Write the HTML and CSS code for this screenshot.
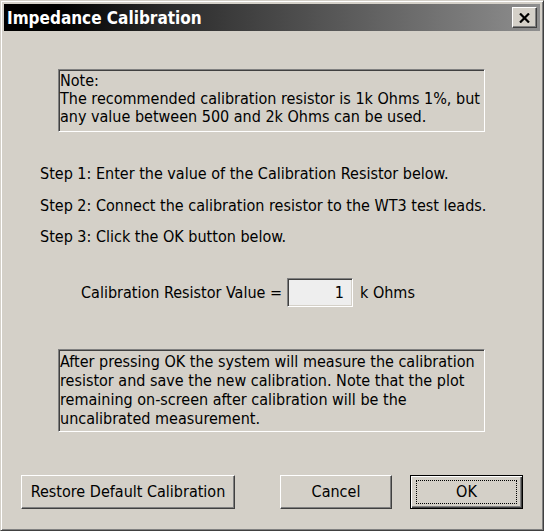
FILE: index.html
```html
<!DOCTYPE html>
<html>
<head>
<meta charset="utf-8">
<link rel="stylesheet" href="styles.css">
</head>
<body>
<div class="window">
  <div class="titlebar">
    <span class="title">Impedance Calibration</span>
    <div class="close">
      <svg width="11" height="10" viewBox="0 0 11 10"><path d="M1 0.5 L10 9.5 M10 0.5 L1 9.5" stroke="#000" stroke-width="2.2" fill="none"/></svg>
    </div>
  </div>
  <div class="content">
    <div class="box note">Note:<br>The recommended calibration resistor is 1k Ohms 1%, but<br>any value between 500 and 2k Ohms can be used.</div>
    <div class="steps">
      <p>Step 1: Enter the value of the Calibration Resistor below.</p>
      <p>Step 2: Connect the calibration resistor to the WT3 test leads.</p>
      <p>Step 3: Click the OK button below.</p>
    </div>
    <div class="value-row">
      <span class="label">Calibration Resistor Value =</span>
      <div class="field">1</div>
      <span class="unit">k Ohms</span>
    </div>
    <div class="box info">After pressing OK the system will measure the calibration<br>resistor and save the new calibration. Note that the plot<br>remaining on-screen after calibration will be the<br>uncalibrated measurement.</div>
    <div class="buttons">
      <div class="btn restore">Restore Default Calibration</div>
      <div class="btn cancel">Cancel</div>
      <div class="btn ok"><span class="focus">OK</span></div>
    </div>
  </div>
</div>
</body>
</html>
```
FILE: styles.css
```css
html, body {
  margin: 0;
  padding: 0;
}
body {
  background: #d4d0c8;
  font-family: "DejaVu Sans Condensed", "DejaVu Sans", sans-serif;
  font-stretch: condensed;
  font-size: 16px;
  color: #000;
}
.window {
  width: 544px;
  height: 531px;
  box-sizing: border-box;
  border: 1px solid;
  border-color: #d4d0c8 #404040 #404040 #d4d0c8;
  box-shadow: inset 1px 1px #ffffff, inset -1px -1px #808080;
  padding: 3px;
  display: flex;
  flex-direction: column;
  background: #d4d0c8;
}
.titlebar {
  height: 27px;
  flex: none;
  background: linear-gradient(to right, #000 0%, #000 10%, #2a2a2a 30%, #8e8e8e 100%);
  display: flex;
  align-items: center;
  justify-content: space-between;
  padding: 0 3px 0 3px;
}
.title {
  color: #fff;
  font-weight: bold;
  font-size: 17px;
}
.close {
  width: 25px;
  height: 21px;
  box-sizing: border-box;
  background: #d4d0c8;
  border: 1px solid;
  border-color: #fff #404040 #404040 #fff;
  box-shadow: inset -1px -1px #808080;
  display: flex;
  align-items: center;
  justify-content: center;
}
.content {
  display: flex;
  flex-direction: column;
  align-items: flex-start;
}
.box {
  box-sizing: border-box;
  width: 427px;
  margin-left: 54px;
  border: 1px solid;
  border-color: #808080 #fff #fff #808080;
  box-shadow: inset 1px 1px #404040, inset -1px -1px #d4d0c8;
  padding: 2px 2px 0 1px;
  white-space: nowrap;
}
.note {
  margin-top: 38px;
  height: 63px;
  line-height: 18px;
}
.steps {
  margin-top: 26px;
  margin-left: 36px;
}
.steps p {
  margin: 0;
  line-height: 31.5px;
}
.value-row {
  margin-top: 25px;
  margin-left: 77px;
  display: flex;
  align-items: center;
  height: 29px;
}
.field {
  box-sizing: border-box;
  width: 66px;
  height: 29px;
  margin: 0 7px 0 5px;
  background: #eeeeee;
  border: 1px solid;
  border-color: #808080 #fff #fff #808080;
  box-shadow: inset 1px 1px #404040, inset -1px -1px #d4d0c8;
  text-align: right;
  padding-right: 8px;
  line-height: 27px;
}
.info {
  margin-top: 42px;
  height: 83px;
  line-height: 19px;
}
.buttons {
  margin-top: 43px;
  margin-left: 17px;
  display: flex;
  height: 34px;
}
.btn {
  box-sizing: border-box;
  height: 34px;
  background: #d4d0c8;
  border: 1px solid;
  border-color: #fff #404040 #404040 #fff;
  box-shadow: inset -1px -1px #808080;
  display: flex;
  align-items: center;
  justify-content: center;
}
.restore {
  width: 214px;
}
.cancel {
  width: 112px;
  margin-left: 45px;
}
.ok {
  width: 113px;
  margin-left: 18px;
  border: 1px solid #000;
  box-shadow: inset 1px 1px #fff, inset -1px -1px #404040, inset -2px -2px #808080;
  padding: 4px 5px;
}
.focus {
  flex: 1;
  align-self: stretch;
  border: 1px dotted #000;
  display: flex;
  align-items: center;
  justify-content: center;
}
```
